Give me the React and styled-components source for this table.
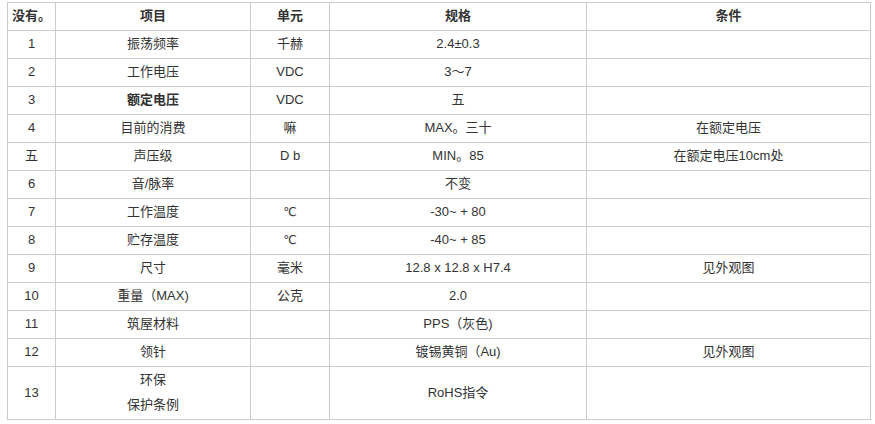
import React from "react";
import styled, { createGlobalStyle } from "styled-components";

const Global = createGlobalStyle`
  html, body { margin: 0; padding: 0; background: #fff; }
  body { font-family: "Liberation Sans", Arial, "Noto Sans CJK SC", sans-serif; }
`;

const Wrap = styled.div`
  padding: 2px 0 0 7px;
`;

const Table = styled.table`
  width: 863px;
  border-collapse: collapse;
  table-layout: fixed;
  font-size: 13px;
  color: #333;
`;

const Cell = styled.td`
  border: 1px solid #ccc;
  padding: 0 4px 2px;
  height: 25px;
  line-height: 25px;
  text-align: center;
  vertical-align: middle;
  font-weight: ${(p) => (p.$bold ? 700 : 400)};
  white-space: nowrap;
`;

const Head = styled(Cell).attrs({ as: "th" })`
  font-weight: 700;
  color: #333;
`;

const Symbol = styled.span`
  display: inline-block;
  line-height: 1;
  font-family: "DejaVu Sans", "Liberation Sans", sans-serif;
  font-size: 12px;
`;

const widths = [48, 195, 79, 257, 284];
const headers = ["没有。", "项目", "单元", "规格", "条件"];

const deg = <Symbol>℃</Symbol>;

const rows = [
  ["1", "振荡频率", "千赫", "2.4±0.3", ""],
  ["2", "工作电压", "VDC", "3〜7", ""],
  ["3", "额定电压", "VDC", "五", "", true],
  ["4", "目前的消费", "嘛", "MAX。三十", "在额定电压"],
  ["五", "声压级", "D b", "MIN。85", "在额定电压10cm处"],
  ["6", "音/脉率", "", "不变", ""],
  ["7", "工作温度", deg, "-30~ + 80", ""],
  ["8", "贮存温度", deg, "-40~ + 85", ""],
  ["9", "尺寸", "毫米", "12.8 x 12.8 x H7.4", "见外观图"],
  ["10", "重量（MAX)", "公克", "2.0", ""],
  ["11", "筑屋材料", "", "PPS（灰色)", ""],
  ["12", "领针", "", "镀锡黄铜（Au)", "见外观图"],
  ["13", ["环保", "保护条例"], "", "RoHS指令", ""],
];

export default function App() {
  return (
    <>
      <Global />
      <Wrap>
        <Table>
          <colgroup>
            {widths.map((w, i) => (
              <col key={i} style={{ width: w }} />
            ))}
          </colgroup>
          <thead>
            <tr>
              {headers.map((h) => (
                <Head key={h}>{h}</Head>
              ))}
            </tr>
          </thead>
          <tbody>
            {rows.map((r, i) => (
              <tr key={i}>
                <Cell>{r[0]}</Cell>
                <Cell $bold={r[5]}>
                  {Array.isArray(r[1])
                    ? r[1].map((t, j) => (
                        <React.Fragment key={j}>
                          {j > 0 && <br />}
                          {t}
                        </React.Fragment>
                      ))
                    : r[1]}
                </Cell>
                <Cell>{r[2]}</Cell>
                <Cell>{r[3]}</Cell>
                <Cell>{r[4]}</Cell>
              </tr>
            ))}
          </tbody>
        </Table>
      </Wrap>
    </>
  );
}
